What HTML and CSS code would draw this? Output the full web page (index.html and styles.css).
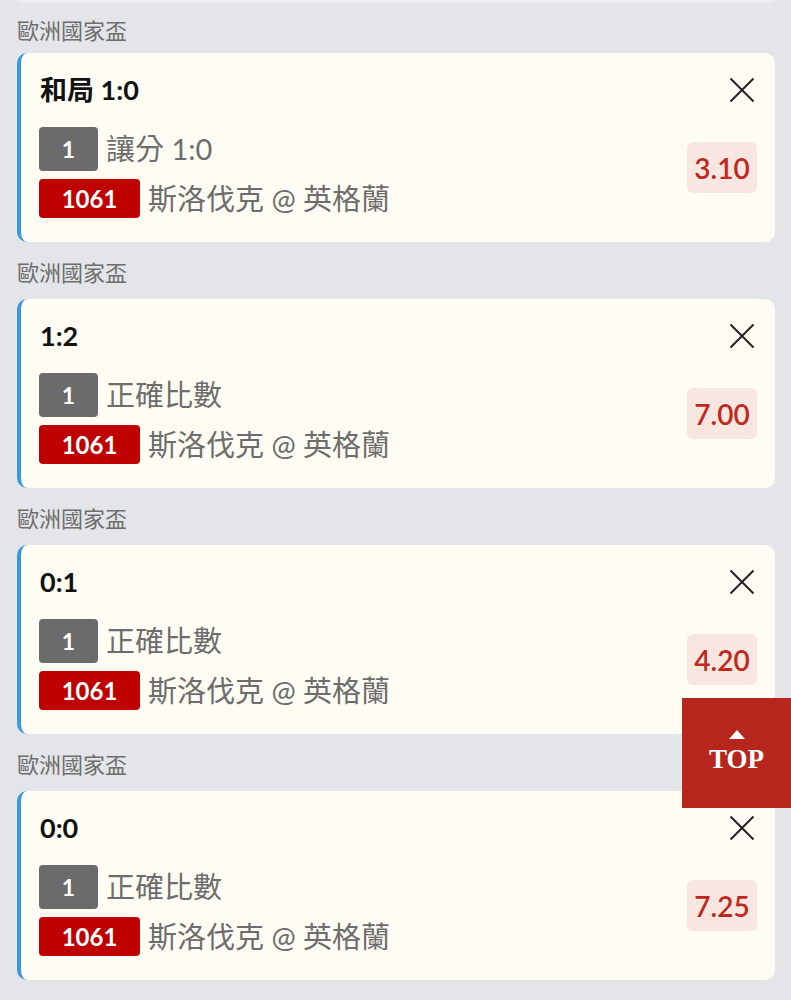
FILE: index.html
```html
<!DOCTYPE html>
<html lang="zh-Hant">
<head>
<meta charset="utf-8">
<title>投注單</title>
<link rel="stylesheet" href="styles.css">
</head>
<body>
<div class="page">
  <div class="prev-card"></div>

  <section class="group first">
    <div class="league">歐洲國家盃</div>
    <div class="card">
      <div class="card-head">
        <div class="pick">和局 1:0</div>
        <svg class="close" viewBox="0 0 26 26" width="26" height="26"><path d="M1.5 1.5 L24.5 24.5 M24.5 1.5 L1.5 24.5"/></svg>
      </div>
      <div class="card-body">
        <div class="lines">
          <div class="line"><span class="tag tag-grey">1</span><span class="txt">讓分 1:0</span></div>
          <div class="line"><span class="tag tag-red">1061</span><span class="txt">斯洛伐克 @ 英格蘭</span></div>
        </div>
        <div class="odds">3.10</div>
      </div>
    </div>
  </section>

  <section class="group">
    <div class="league">歐洲國家盃</div>
    <div class="card">
      <div class="card-head">
        <div class="pick">1:2</div>
        <svg class="close" viewBox="0 0 26 26" width="26" height="26"><path d="M1.5 1.5 L24.5 24.5 M24.5 1.5 L1.5 24.5"/></svg>
      </div>
      <div class="card-body">
        <div class="lines">
          <div class="line"><span class="tag tag-grey">1</span><span class="txt">正確比數</span></div>
          <div class="line"><span class="tag tag-red">1061</span><span class="txt">斯洛伐克 @ 英格蘭</span></div>
        </div>
        <div class="odds">7.00</div>
      </div>
    </div>
  </section>

  <section class="group">
    <div class="league">歐洲國家盃</div>
    <div class="card">
      <div class="card-head">
        <div class="pick">0:1</div>
        <svg class="close" viewBox="0 0 26 26" width="26" height="26"><path d="M1.5 1.5 L24.5 24.5 M24.5 1.5 L1.5 24.5"/></svg>
      </div>
      <div class="card-body">
        <div class="lines">
          <div class="line"><span class="tag tag-grey">1</span><span class="txt">正確比數</span></div>
          <div class="line"><span class="tag tag-red">1061</span><span class="txt">斯洛伐克 @ 英格蘭</span></div>
        </div>
        <div class="odds">4.20</div>
      </div>
    </div>
  </section>

  <section class="group">
    <div class="league">歐洲國家盃</div>
    <div class="card">
      <div class="card-head">
        <div class="pick">0:0</div>
        <svg class="close" viewBox="0 0 26 26" width="26" height="26"><path d="M1.5 1.5 L24.5 24.5 M24.5 1.5 L1.5 24.5"/></svg>
      </div>
      <div class="card-body">
        <div class="lines">
          <div class="line"><span class="tag tag-grey">1</span><span class="txt">正確比數</span></div>
          <div class="line"><span class="tag tag-red">1061</span><span class="txt">斯洛伐克 @ 英格蘭</span></div>
        </div>
        <div class="odds">7.25</div>
      </div>
    </div>
  </section>
</div>

<a class="to-top" href="#">
  <span class="arrow"></span>
  <span class="top-text">TOP</span>
</a>
</body>
</html>
```

FILE: styles.css
```css
html, body {
  margin: 0;
  padding: 0;
  background: #e4e5e9;
}
body {
  font-family: Lato, "Noto Sans CJK TC", sans-serif;
  color: #111;
  height: 1000px;
  overflow: hidden;
}
.page {
  padding: 0 16px 0 17px;
}
.prev-card {
  height: 3px;
  background: #ecedef;
  border-radius: 0 0 10px 10px;
}
.group .league {
  padding: 16px 0 15px 0;
  font-size: 22px;
  line-height: 26px;
  color: #6e6e6e;
  font-family: "Noto Sans CJK TC", sans-serif;
}
.group.first .league {
  padding-top: 13px;
  padding-bottom: 11px;
}
.card {
  height: 189px;
  box-sizing: border-box;
  background: #fffdf3;
  border-left: 4px solid #3a98dc;
  border-radius: 10px;
  padding: 20px 18px 0 18px;
}
.card-head {
  display: flex;
  align-items: center;
  justify-content: space-between;
  height: 34px;
}
.pick {
  font-size: 27px;
  font-weight: 700;
  line-height: 34px;
  color: #111;
  padding-left: 1px;
}
.close {
  display: block;
  margin-right: 2px;
  fill: none;
  stroke: #222;
  stroke-width: 2;
}
.card-body {
  display: flex;
  align-items: center;
  justify-content: space-between;
  margin-top: 20px;
}
.lines {
  display: flex;
  flex-direction: column;
  gap: 8px;
}
.line {
  display: flex;
  align-items: center;
}
.tag {
  display: flex;
  align-items: center;
  justify-content: center;
  color: #fff;
  font-weight: 700;
  border-radius: 4px;
  font-family: Lato, sans-serif;
}
.tag-grey {
  width: 59px;
  height: 44px;
  background: #6b6b6b;
  font-size: 23px;
}
.tag-red {
  width: 101px;
  height: 39px;
  background: #bf0000;
  font-size: 24px;
}
.txt {
  margin-left: 8px;
  font-size: 29px;
  line-height: 36px;
  color: #6d6d6d;
  font-family: Lato, "Noto Sans CJK TC", sans-serif;
}
.odds {
  width: 70px;
  height: 51px;
  display: flex;
  align-items: center;
  justify-content: center;
  background: #f8e6e0;
  border-radius: 6px;
  color: #c0281e;
  font-size: 28px;
  font-weight: 600;
  font-family: Lato, sans-serif;
  margin-bottom: 10px;
}
.to-top {
  position: fixed;
  left: 682px;
  top: 698px;
  width: 109px;
  height: 110px;
  background: #b6261c;
  display: flex;
  flex-direction: column;
  align-items: center;
  justify-content: center;
  text-decoration: none;
}
.arrow {
  width: 0;
  height: 0;
  border-left: 8px solid transparent;
  border-right: 8px solid transparent;
  border-bottom: 9px solid #fff;
  margin-bottom: 8px;
}
.top-text {
  font-family: "Liberation Serif", serif;
  font-weight: 700;
  font-size: 27px;
  line-height: 24px;
  color: #fff;
  margin-bottom: 6px;
}
```
